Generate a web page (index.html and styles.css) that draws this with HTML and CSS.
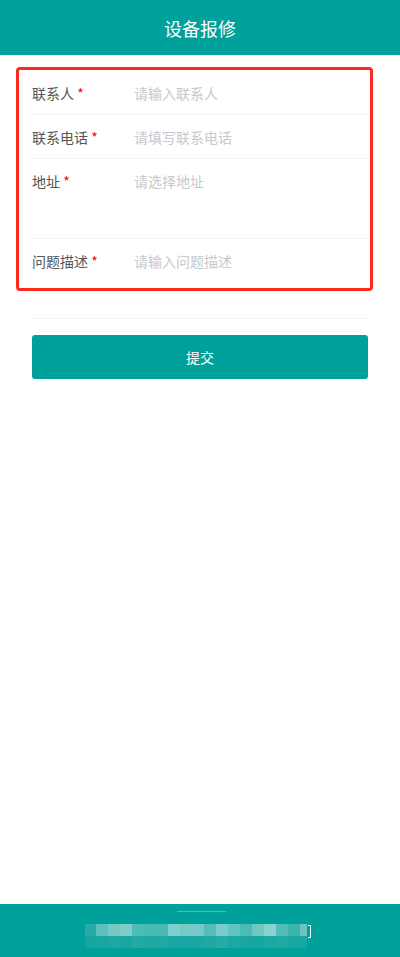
FILE: index.html
```html
<!DOCTYPE html>
<html lang="zh-CN">
<head>
<meta charset="UTF-8">
<meta name="viewport" content="width=device-width, initial-scale=1.0">
<title>设备报修</title>
<link rel="stylesheet" href="styles.css">
</head>
<body>
<div class="header">设备报修</div>

<div class="form">
<div class="row">
<div class="label">联系人 <span class="req">*</span></div>
<input class="field" type="text" placeholder="请输入联系人">
</div>
<div class="row">
<div class="label">联系电话 <span class="req">*</span></div>
<input class="field" type="text" placeholder="请填写联系电话">
</div>
<div class="row row-tall">
<div class="label">地址 <span class="req">*</span></div>
<textarea class="field area" placeholder="请选择地址"></textarea>
</div>
<div class="row row-tall">
<div class="label">问题描述 <span class="req">*</span></div>
<textarea class="field area" placeholder="请输入问题描述"></textarea>
</div>
<button class="submit">提交</button>
</div>

<div class="mark"></div>

<div class="footer">
<div class="handle"></div>
<div class="mosaic">
<div class="mosaic-row">
<span style="background:#27aba5"></span><span style="background:#5bbfba"></span><span style="background:#74c8c5"></span><span style="background:#7ecdca"></span><span style="background:#4dbbb6"></span><span style="background:#48b9b4"></span><span style="background:#4bbab5"></span><span style="background:#80cfcc"></span><span style="background:#74cac7"></span><span style="background:#75cac7"></span><span style="background:#55bdb8"></span><span style="background:#7acdca"></span><span style="background:#63c5c1"></span><span style="background:#4cbab5"></span><span style="background:#6fc7c3"></span><span style="background:#88d2d0"></span><span style="background:#52bcb7"></span><span style="background:#3ab4af"></span><span class="last" style="background:#6ac5c1"></span>
</div>
<div class="mosaic-row">
<span style="background:#16a59f"></span><span style="background:#17a6a0"></span><span style="background:#1ea8a2"></span><span style="background:#19a6a0"></span><span style="background:#22aaa4"></span><span style="background:#1ea8a2"></span><span style="background:#20a9a3"></span><span style="background:#1aa7a1"></span><span style="background:#17a6a0"></span><span style="background:#1ba7a1"></span><span style="background:#1ea8a2"></span><span style="background:#25aba5"></span><span style="background:#1ca8a2"></span><span style="background:#19a6a0"></span><span style="background:#17a59f"></span><span style="background:#1ca8a2"></span><span style="background:#1fa9a3"></span><span style="background:#1ba7a1"></span><span class="last" style="background:#17a6a0"></span>
</div>
<div class="bracket"></div>
</div>
</div>
</body>
</html>
```

FILE: styles.css
```css
body {
font-family: "Noto Sans CJK SC", "Noto Sans", sans-serif;
margin: 0;
min-height: 100vh;
display: flex;
flex-direction: column;
background-color: #fff;
color: #555;
position: relative;
}

.header {
height: 55px;
background-color: #00a19a;
color: #fff;
font-size: 18px;
display: flex;
justify-content: center;
align-items: center;
flex-shrink: 0;
}

.form {
padding: 16px 32px 0;
}

.row {
display: flex;
align-items: center;
height: 44px;
box-sizing: border-box;
border-bottom: 1px solid #f2f2f2;
font-size: 14px;
}

.row-tall {
height: 80px;
align-items: flex-start;
padding-top: 12px;
}

.label {
width: 102px;
flex-shrink: 0;
line-height: 20px;
color: #555;
}

.req {
color: #f00;
}

.field {
flex: 1;
border: none;
outline: none;
padding: 0;
font-family: inherit;
font-size: 14px;
line-height: 20px;
color: #333;
background: transparent;
}

.field::placeholder {
color: #c6c8cc;
}

.area {
height: 56px;
resize: none;
}

.submit {
display: block;
width: 100%;
height: 44px;
margin-top: 16px;
border: none;
border-radius: 3px;
background-color: #00a19a;
color: #fff;
font-family: inherit;
font-size: 14px;
cursor: pointer;
}

/* annotation frame drawn over the form */
.mark {
position: absolute;
top: 67px;
left: 16px;
width: 357px;
height: 224px;
box-sizing: border-box;
border: 3px solid #ff2a1f;
border-radius: 4px;
}

.footer {
margin-top: auto;
height: 53px;
background-color: #00a19a;
display: flex;
flex-direction: column;
align-items: center;
flex-shrink: 0;
}

.handle {
width: 49px;
height: 1px;
margin-top: 7px;
margin-left: 3px;
background-color: #4cbdb8;
}

.mosaic {
margin-top: 12px;
display: flex;
flex-direction: column;
position: relative;
margin-left: -8px;
}

.mosaic-row {
display: flex;
}

.mosaic-row span {
width: 12px;
height: 12px;
}

.mosaic-row span:first-child {
width: 11px;
}

.mosaic-row span.last {
width: 7px;
}

.bracket {
position: absolute;
right: -4px;
top: 1px;
width: 2px;
height: 11px;
border: 1px solid #fff;
border-left: none;
}
```
